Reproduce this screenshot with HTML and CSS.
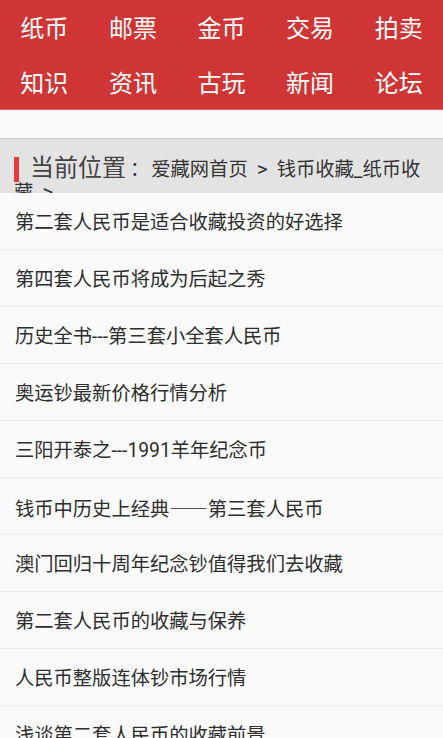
FILE: index.html
```html
<!DOCTYPE html>
<html lang="zh-CN">
<head>
    <meta charset="UTF-8">
    <title>钱币收藏_纸币收藏</title>
    <link rel="stylesheet" href="styles.css">
</head>
<body>
<div class="nav">
    <a>纸币</a><a>邮票</a><a>金币</a><a>交易</a><a>拍卖</a>
    <a>知识</a><a>资讯</a><a>古玩</a><a>新闻</a><a>论坛</a>
</div>
<div class="gap"></div>
<div class="crumb">
    <span class="mark"></span><span class="here">当前位置</span><span class="colon">：</span><a>爱藏网首页</a><span class="sep">&gt;</span><a>钱币收藏_纸币收藏</a><span class="sep">&gt;</span>
</div>
<ul class="list">
    <li><a>第二套人民币是适合收藏投资的好选择</a></li>
    <li><a>第四套人民币将成为后起之秀</a></li>
    <li><a>历史全书---第三套小全套人民币</a></li>
    <li><a>奥运钞最新价格行情分析</a></li>
    <li><a>三阳开泰之---1991羊年纪念币</a></li>
    <li><a>钱币中历史上经典<span class="dash">——</span>第三套人民币</a></li>
    <li><a>澳门回归十周年纪念钞值得我们去收藏</a></li>
    <li><a>第二套人民币的收藏与保养</a></li>
    <li><a>人民币整版连体钞市场行情</a></li>
    <li><a>浅谈第二套人民币的收藏前景</a></li>
</ul>
</body>
</html>
```

FILE: styles.css
```css
/*reset*/
body,ul,li{margin:0;padding:0}
ul{list-style:none}
a{text-decoration:none;color:inherit}
body{
    font-family: Roboto, "Noto Sans CJK SC", sans-serif;
    color:#333;
    background:#fafafa;
}
.nav{
    display:grid;
    grid-template-columns:repeat(5,1fr);
    grid-auto-rows:55px;
    background:#cf3535;
    border-bottom:1px solid #e06060;
    height:109px;
}
.nav a{
    color:#fff;
    font-size:24px;
    display:flex;
    align-items:center;
    justify-content:center;
    padding-bottom:3px;
}
.gap{
    height:28px;
    background:#f9f9f9;
}
.crumb{
    overflow:hidden;
    background:#e3e3e3;
    border-top:1px solid #cfcfcf;
    padding:18px 14px 0;
    box-sizing:border-box;
    height:55px;
    font-size:19.3px;
    line-height:21px;
    color:#333;
}
.mark{
    display:inline-block;
    width:5px;
    height:25px;
    background:#e8383b;
    vertical-align:-6px;
    margin-right:11px;
}
.here{
    font-size:24px;
    color:#444;
}
.colon{
    margin:0 2px 0 4px;
}
.sep{
    margin:0 9px 0 9px;
    font-size:21px;
}
.list li{
    height:52px;
    line-height:52px;
    padding-top:4px;
    border-bottom:1px solid #ececec;
    padding-left:15px;
    font-size:19.3px;
    color:#2e2e2e;
    white-space:nowrap;
    overflow:hidden;
}
.dash{
    font-family:"Noto Sans CJK SC", sans-serif;
}
```
